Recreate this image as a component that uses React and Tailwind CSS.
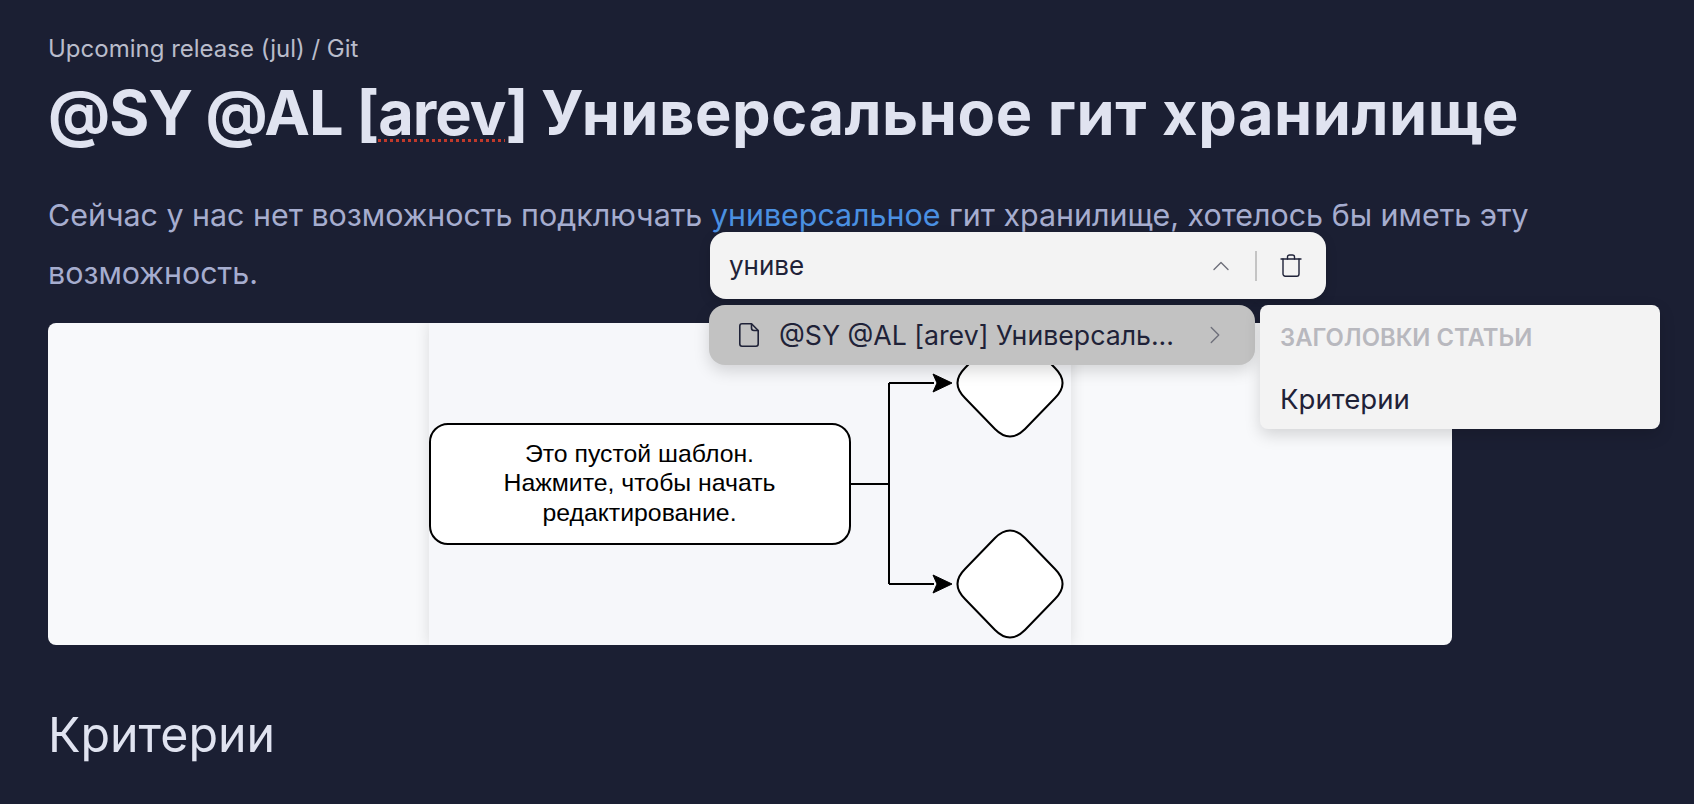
import { ChevronUp, ChevronRight } from "lucide-react";

const FileIcon = () => (
  <svg width="20" height="24" viewBox="0 0 20 24" fill="none" stroke="#1f2238" strokeWidth="1.6" strokeLinejoin="round" className="shrink-0">
    <path d="M3 .8h9.5L19.2 7.5V21a2.2 2.2 0 0 1-2.2 2.2H3A2.2 2.2 0 0 1 .8 21V3A2.2 2.2 0 0 1 3 .8Z" />
    <path d="M12.5.8V5a2.5 2.5 0 0 0 2.5 2.5h4.2" />
  </svg>
);

const TrashIcon = () => (
  <svg width="22" height="23" viewBox="0 0 22 23" fill="none" stroke="#1f2238" strokeWidth="1.4" strokeLinecap="round" className="shrink-0">
    <path d="M1 5h20" />
    <path d="M7.5 5V3a2 2 0 0 1 2-2h3a2 2 0 0 1 2 2v2" />
    <path d="M3 5v15a2.2 2.2 0 0 0 2.2 2.2h11.6A2.2 2.2 0 0 0 19 20V5" />
  </svg>
);

const Diamond = ({ cy }) => (
  <path
    d={`M566 ${cy - 46} Q581 ${cy - 61} 596 ${cy - 46} L626 ${cy - 15} Q641 ${cy} 626 ${cy + 15} L596 ${cy + 46} Q581 ${cy + 61} 566 ${cy + 46} L536 ${cy + 15} Q521 ${cy} 536 ${cy - 15} Z`}
    fill="#fff"
    stroke="#000"
    strokeWidth="2"
  />
);

const Diagram = () => (
  <svg width="642" height="322" viewBox="0 0 642 322" className="block">
    <rect x="1" y="101" width="420" height="120" rx="18" fill="#fff" stroke="#000" strokeWidth="2" />
    <g fontFamily="'Liberation Sans', Arial, sans-serif" fontSize="24.8" textAnchor="middle" fill="#000">
      <text x="210.5" y="139">Это пустой шаблон.</text>
      <text x="210.5" y="168">Нажмите, чтобы начать</text>
      <text x="210.5" y="198">редактирование.</text>
    </g>
    <path d="M421 161H460M460 60V261M460 60H505M460 261H505" fill="none" stroke="#000" strokeWidth="2" />
    <path d="M523 60L504 51L508 60L504 69Z" fill="#000" stroke="#000" />
    <path d="M523 261L504 252L508 261L504 270Z" fill="#000" stroke="#000" />
    <Diamond cy={60} />
    <Diamond cy={261} />
  </svg>
);

export default function App() {
  return (
    <div className="relative h-[804px] overflow-hidden bg-[#1b1f33] pl-12 font-['Inter',sans-serif]">
      <div className="pt-[35px] text-[24px] leading-[28px] text-[#b9bccb]">Upcoming release (jul) / Git</div>
      <h1 className="mt-[16px] whitespace-nowrap text-[61.25px] leading-[68px] font-bold text-[#e0e3f0]">
        <span className="tracking-[-1px]">
          @SY @AL [<span className="underline decoration-dotted decoration-[#c0392b] decoration-[3px] underline-offset-[4px] [text-decoration-skip-ink:none]">arev</span>]{" "}
        </span>
        <span className="tracking-[0.57px]">Универсальное гит хранилище</span>
      </h1>
      <p className="mt-[39px] w-[1600px] text-[30.4px] leading-[58px] text-[#a6adcf]">
        Сейчас у нас нет возможность подключать <span className="text-[#4a90e2]">универсальное</span> гит хранилище, хотелось бы иметь эту возможность.
      </p>
      <div className="mt-[21px] flex h-[322px] w-[1404px] justify-center overflow-hidden rounded-lg bg-[#f8f9fb]">
        <div className="w-[642px] bg-[#f6f7fa] shadow-[0_0_14px_rgba(0,0,0,0.12)]">
          <Diagram />
        </div>
      </div>
      <h2 className="mt-[60px] text-[48.3px] leading-[60px] font-normal text-[#e0e3f0]">Критерии</h2>

      {/* поиск поверх статьи */}
      <div className="absolute top-[232px] left-[710px] flex h-[67px] w-[616px] items-center rounded-[16px] bg-[#f3f3f3] pr-[24px] pl-[19px] shadow-[0_4px_12px_rgba(0,0,0,0.15)]">
        <span className="flex-1 text-[26px] text-[#1f2238]">униве</span>
        <ChevronUp size={28} strokeWidth={1.2} className="mr-[20px] text-[#6e6f7a]" />
        <div className="mr-[23px] h-[30px] w-[2px] bg-[#c4c4c4]" />
        <TrashIcon />
      </div>

      <div className="absolute top-[305px] left-[709px] flex h-[60px] w-[546px] items-center rounded-[16px] bg-[#c2c2c2] pr-[25px] pl-[30px] shadow-[0_6px_16px_rgba(0,0,0,0.15)]">
        <FileIcon />
        <span className="ml-[20px] flex-1 whitespace-nowrap text-[26.7px] text-[#1f2238]">@SY @AL [arev] Универсаль...</span>
        <ChevronRight size={30} strokeWidth={1.1} className="text-[#6e6f7a]" />
      </div>

      <div className="absolute top-[305px] left-[1260px] h-[124px] w-[400px] rounded-lg bg-[#f3f3f3] px-[20px] shadow-[0_6px_16px_rgba(0,0,0,0.15)]">
        <div className="pt-[18px] text-[23.8px] leading-[30px] font-semibold text-[#b8b8be]">ЗАГОЛОВКИ СТАТЬИ</div>
        <div className="mt-[30px] text-[27.6px] leading-[32px] text-[#1f2238]">Критерии</div>
      </div>
    </div>
  );
}
